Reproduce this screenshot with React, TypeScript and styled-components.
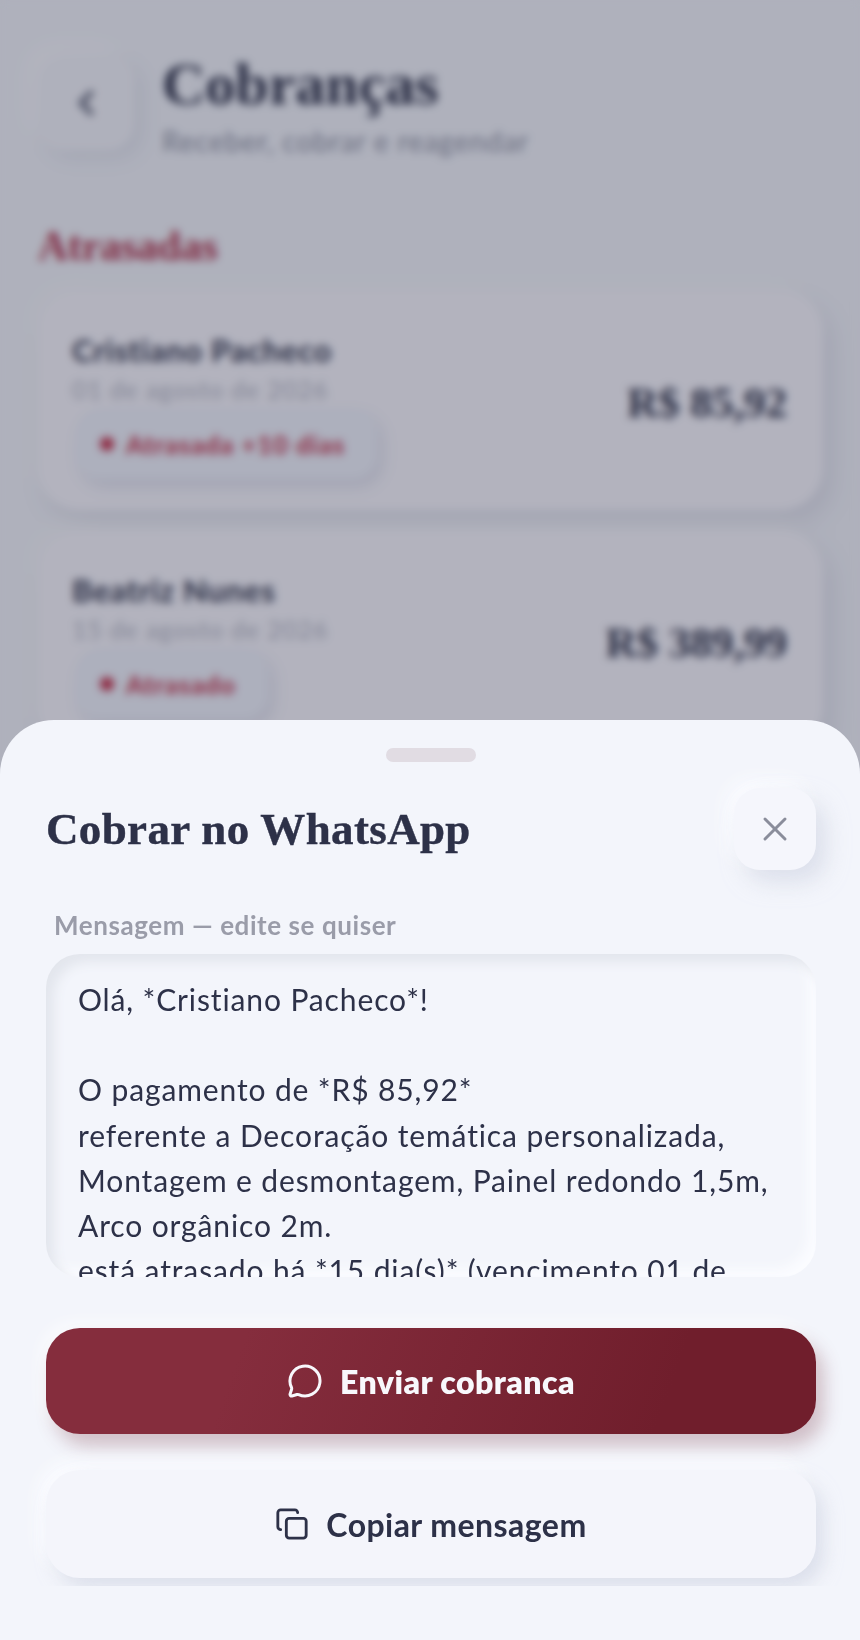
import React from "react";
import styled, { createGlobalStyle } from "styled-components";
import { ChevronLeft, Copy, MessageCircle, X } from "lucide-react";

const GlobalStyle = createGlobalStyle`
  html, body {
    margin: 0;
    padding: 0;
    background: #f3f5fb;
  }
  * {
    box-sizing: border-box;
  }
`;

const Screen = styled.div`
  position: relative;
  width: 860px;
  height: 1640px;
  overflow: hidden;
  background: #f3f5fb;
  font-family: "Lato", "Noto Sans", sans-serif;
  color: #2d3148;
`;

const PageBody = styled.div`
  display: flex;
  flex-direction: column;
  padding: 55px 37px 0 38px;
`;

const Header = styled.header`
  display: flex;
  gap: 28px;
  margin-bottom: 68px;
`;

const BackButton = styled.div`
  display: flex;
  align-items: center;
  justify-content: center;
  width: 96px;
  height: 95px;
  flex: none;
  border-radius: 26px;
  background: #f4f5fb;
  color: #5a5e72;
  box-shadow: 8px 8px 18px rgba(205, 208, 222, 0.45), -10px -10px 20px #fbfbff;
`;

const HeaderText = styled.div`
  display: flex;
  flex-direction: column;
  margin-top: -12px;
`;

const PageTitle = styled.h1`
  margin: 0;
  font-family: "Liberation Serif", serif;
  font-weight: 700;
  font-size: 60px;
  line-height: 82px;
  color: #2d3148;
`;

const PageSubtitle = styled.p`
  margin: 0;
  font-size: 28px;
  line-height: 32px;
  letter-spacing: 0.9px;
  color: #8c8fa0;
`;

const SectionTitle = styled.h2`
  margin: 0 0 23px;
  font-family: "Liberation Serif", serif;
  font-weight: 700;
  font-size: 41.5px;
  line-height: 42px;
  color: #b0304a;
`;

const CardList = styled.div`
  display: flex;
  flex-direction: column;
  gap: 20px;
`;

const ChargeCard = styled.div`
  display: flex;
  align-items: center;
  justify-content: space-between;
  height: 220px;
  padding: 0 36px 0 34px;
  border-radius: 42px;
  background: #f9f8fe;
  box-shadow: 8px 12px 24px rgba(190, 190, 208, 0.4), -8px -8px 20px rgba(255, 255, 255, 0.5);
`;

const ChargeInfo = styled.div`
  display: flex;
  flex-direction: column;
  align-items: flex-start;
  margin-top: 11px;
`;

const ClientName = styled.div`
  font-weight: 700;
  font-size: 31px;
  line-height: 36px;
  letter-spacing: 0.75px;
  color: #2d3148;
`;

const ChargeDate = styled.div`
  margin-top: 4px;
  font-size: 25px;
  line-height: 34px;
  letter-spacing: 0.8px;
  color: #b3b5c2;
`;

const StatusPill = styled.div`
  display: flex;
  align-items: center;
  gap: 12px;
  height: 70px;
  margin-top: 3px;
  margin-left: 4px;
  padding: 0 32px 0 24px;
  border-radius: 24px;
  background: #f0f3fc;
  box-shadow: 5px 7px 14px rgba(190, 195, 215, 0.45);
  font-weight: 700;
  font-size: 25.5px;
  letter-spacing: 1px;
  color: #c22a44;
`;

const StatusDot = styled.span`
  width: 14px;
  height: 14px;
  border-radius: 50%;
  background: #c22a44;
`;

const Amount = styled.div`
  margin-top: 4px;
  font-family: "Liberation Serif", serif;
  font-weight: 700;
  font-size: 43px;
  color: #2d3148;
`;

const Backdrop = styled.div`
  position: absolute;
  inset: 0;
  background: rgba(30, 35, 55, 0.32);
  backdrop-filter: blur(4px);
`;

const Sheet = styled.section`
  position: absolute;
  left: 0;
  right: 0;
  bottom: 0;
  display: flex;
  flex-direction: column;
  height: 920px;
  padding-bottom: 54px;
  border-radius: 54px 54px 0 0;
  background: #f3f5fb;
`;

const Handle = styled.div`
  flex: none;
  align-self: center;
  width: 90px;
  height: 14px;
  margin-top: 28px;
  margin-left: 2px;
  border-radius: 8px;
  background: #e1dce3;
`;

const SheetScroll = styled.div`
  flex: 1;
  display: flex;
  flex-direction: column;
  min-height: 0;
  padding: 26px 44px 0 46px;
  overflow: hidden;
`;

const SheetHeader = styled.div`
  display: flex;
  flex: none;
  align-items: center;
  justify-content: space-between;
  margin-bottom: 37px;
`;

const SheetTitle = styled.h2`
  margin: 0;
  font-family: "Liberation Serif", serif;
  font-weight: 700;
  font-size: 45px;
  letter-spacing: 0.35px;
  -webkit-text-stroke: 0.4px #2d3148;
  color: #2d3148;
`;

const CloseButton = styled.button`
  display: flex;
  align-items: center;
  justify-content: center;
  width: 82px;
  height: 82px;
  padding: 0;
  border: none;
  border-radius: 26px;
  background: #f5f6fc;
  color: #8a8d9b;
  box-shadow: 10px 12px 22px rgba(205, 210, 225, 0.6), -8px -8px 18px #fbfcff;
`;

const FieldLabel = styled.label`
  display: block;
  flex: none;
  margin: 0 0 11px 8px;
  font-weight: 700;
  font-size: 26px;
  line-height: 36px;
  letter-spacing: 0.57px;
  color: #9a9ca9;
`;

const MessageBox = styled.textarea`
  display: block;
  flex: none;
  width: 100%;
  height: 323px;
  padding: 23px 32px 0;
  border: none;
  outline: none;
  resize: none;
  overflow: hidden;
  white-space: pre;
  border-radius: 34px;
  background: #f3f5fb;
  box-shadow: inset 8px 8px 12px #e3e6ed, inset -8px -8px 12px #fbfcff;
  font-family: "Lato", "Noto Sans", sans-serif;
  font-size: 30px;
  line-height: 45.2px;
  letter-spacing: 0.88px;
  color: #2d3148;
`;

const ActionList = styled.div`
  display: flex;
  flex: none;
  flex-direction: column;
  gap: 36px;
  margin-top: 51px;
`;

const ActionButton = styled.button<{ $primary?: boolean }>`
  display: flex;
  align-items: center;
  justify-content: center;
  gap: ${({ $primary }) => ($primary ? "17px" : "17px")};
  width: 100%;
  height: ${({ $primary }) => ($primary ? "106px" : "108px")};
  flex: none;
  padding: 0;
  border: none;
  border-radius: 34px;
  font-family: "Lato", "Noto Sans", sans-serif;
  font-weight: ${({ $primary }) => ($primary ? 800 : 700)};
  font-size: 32px;
  letter-spacing: 0.45px;
  color: ${({ $primary }) => ($primary ? "#f8f8fc" : "#2d3148")};
  background: ${({ $primary }) =>
    $primary ? "linear-gradient(110deg, #852d3d 25%, #701e2c 80%)" : "#f4f5fb"};
  box-shadow: ${({ $primary }) =>
    $primary
      ? "8px 12px 18px rgba(120, 50, 65, 0.28), -6px -6px 16px rgba(255, 255, 255, 0.6)"
      : "8px 10px 18px rgba(205, 210, 225, 0.6), -8px -8px 16px #fbfcff"};
`;

const message = [
  "Olá, *Cristiano Pacheco*!",
  "",
  "O pagamento de *R$ 85,92*",
  "referente a Decoração temática personalizada,",
  "Montagem e desmontagem, Painel redondo 1,5m,",
  "Arco orgânico 2m.",
  "está atrasado há *15 dia(s)* (vencimento 01 de",
  "agosto de 2026).",
].join("\n");

const charges = [
  { name: "Cristiano Pacheco", date: "01 de agosto de 2026", status: "Atrasada +10 dias", amount: "R$ 85,92" },
  { name: "Beatriz Nunes", date: "15 de agosto de 2026", status: "Atrasado", amount: "R$ 389,99" },
];

const App: React.FC = () => {
  return (
    <Screen>
      <GlobalStyle />
      <PageBody>
        <Header>
          <BackButton>
            <ChevronLeft size={40} strokeWidth={3} />
          </BackButton>
          <HeaderText>
            <PageTitle>Cobranças</PageTitle>
            <PageSubtitle>Receber, cobrar e reagendar</PageSubtitle>
          </HeaderText>
        </Header>
        <SectionTitle>Atrasadas</SectionTitle>
        <CardList>
          {charges.map((charge) => (
            <ChargeCard key={charge.name}>
              <ChargeInfo>
                <ClientName>{charge.name}</ClientName>
                <ChargeDate>{charge.date}</ChargeDate>
                <StatusPill>
                  <StatusDot />
                  {charge.status}
                </StatusPill>
              </ChargeInfo>
              <Amount>{charge.amount}</Amount>
            </ChargeCard>
          ))}
        </CardList>
      </PageBody>
      <Backdrop />
      <Sheet>
        <Handle />
        <SheetScroll>
          <SheetHeader>
            <SheetTitle>Cobrar no WhatsApp</SheetTitle>
            <CloseButton aria-label="Fechar">
              <X size={40} strokeWidth={1.8} />
            </CloseButton>
          </SheetHeader>
          <FieldLabel>Mensagem — edite se quiser</FieldLabel>
          <MessageBox readOnly value={message} />
          <ActionList>
            <ActionButton $primary>
              <MessageCircle size={36} strokeWidth={2} />
              Enviar cobranca
            </ActionButton>
            <ActionButton>
              <Copy size={34} strokeWidth={2} />
              Copiar mensagem
            </ActionButton>
          </ActionList>
        </SheetScroll>
      </Sheet>
    </Screen>
  );
};

export default App;
